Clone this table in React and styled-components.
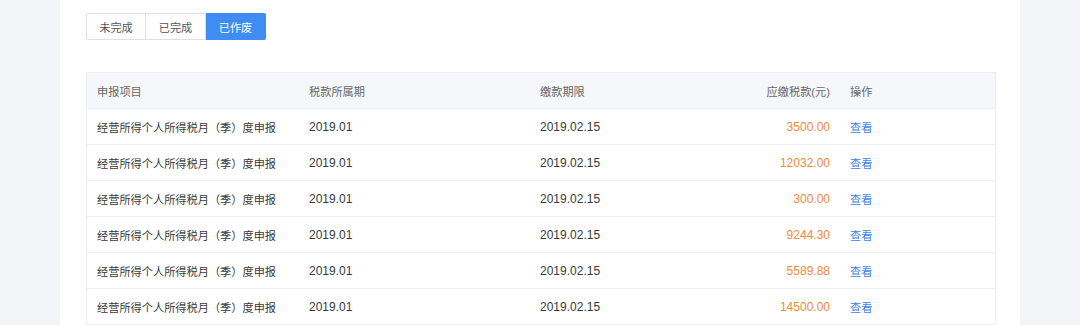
import styled, { createGlobalStyle } from "styled-components";

const Global = createGlobalStyle`
  body {
    margin: 0;
    background: #f4f5f9;
    font-family: "Liberation Sans", "Noto Sans CJK SC", sans-serif;
    font-size: 11.2px;
    color: #333;
  }
`;

const Page = styled.div`
  display: flex;
  justify-content: center;
`;

const Panel = styled.div`
  width: 960px;
  min-height: 340px;
  background: #fff;
  padding: 13px 24px 0 26px;
  box-sizing: border-box;
`;

const Tabs = styled.div`
  display: flex;
`;

const Tab = styled.div`
  width: 60px;
  height: 27px;
  box-sizing: border-box;
  display: flex;
  align-items: center;
  justify-content: center;
  border: 1px solid ${(p) => (p.active ? "#3f8cf2" : "#dcdfe6")};
  border-left-width: ${(p) => (p.first ? "1px" : "0")};
  background: ${(p) => (p.active ? "#3f8cf2" : "#fff")};
  color: ${(p) => (p.active ? "#fff" : "#555")};
  border-radius: ${(p) => (p.first ? "2px 0 0 2px" : p.last ? "0 2px 2px 0" : "0")};
`;

const Table = styled.div`
  margin-top: 32px;
  width: 910px;
  border: 1px solid #eceef2;
  border-bottom: none;
  box-sizing: border-box;
`;

const Row = styled.div`
  display: grid;
  grid-template-columns: 212px 231px 150px 160px 1fr;
  height: 36px;
  box-sizing: border-box;
  border-bottom: 1px solid #eceef2;
  align-items: center;
  background: ${(p) => (p.head ? "#f5f7fa" : "#fff")};
  color: ${(p) => (p.head ? "#666" : "#3a3a3a")};
`;

const Cell = styled.div`
  padding: 0 10px;
  text-align: ${(p) => (p.right ? "right" : "left")};
  font-size: ${(p) => (p.num ? "12px" : "inherit")};
  white-space: nowrap;
`;

const Amount = styled(Cell)`
  color: #f08a3c;
`;

const Link = styled.a`
  color: #3d84e0;
  cursor: pointer;
`;

const rows = [
  "3500.00",
  "12032.00",
  "300.00",
  "9244.30",
  "5589.88",
  "14500.00",
];

export default function App() {
  return (
    <Page>
      <Global />
      <Panel>
        <Tabs>
          <Tab first>未完成</Tab>
          <Tab>已完成</Tab>
          <Tab active last>已作废</Tab>
        </Tabs>
        <Table>
          <Row head>
            <Cell>申报项目</Cell>
            <Cell>税款所属期</Cell>
            <Cell>缴款期限</Cell>
            <Cell right>应缴税款(元)</Cell>
            <Cell>操作</Cell>
          </Row>
          {rows.map((amt, i) => (
            <Row key={i}>
              <Cell>经营所得个人所得税月（季）度申报</Cell>
              <Cell num>2019.01</Cell>
              <Cell num>2019.02.15</Cell>
              <Amount right num>{amt}</Amount>
              <Cell>
                <Link>查看</Link>
              </Cell>
            </Row>
          ))}
        </Table>
      </Panel>
    </Page>
  );
}
